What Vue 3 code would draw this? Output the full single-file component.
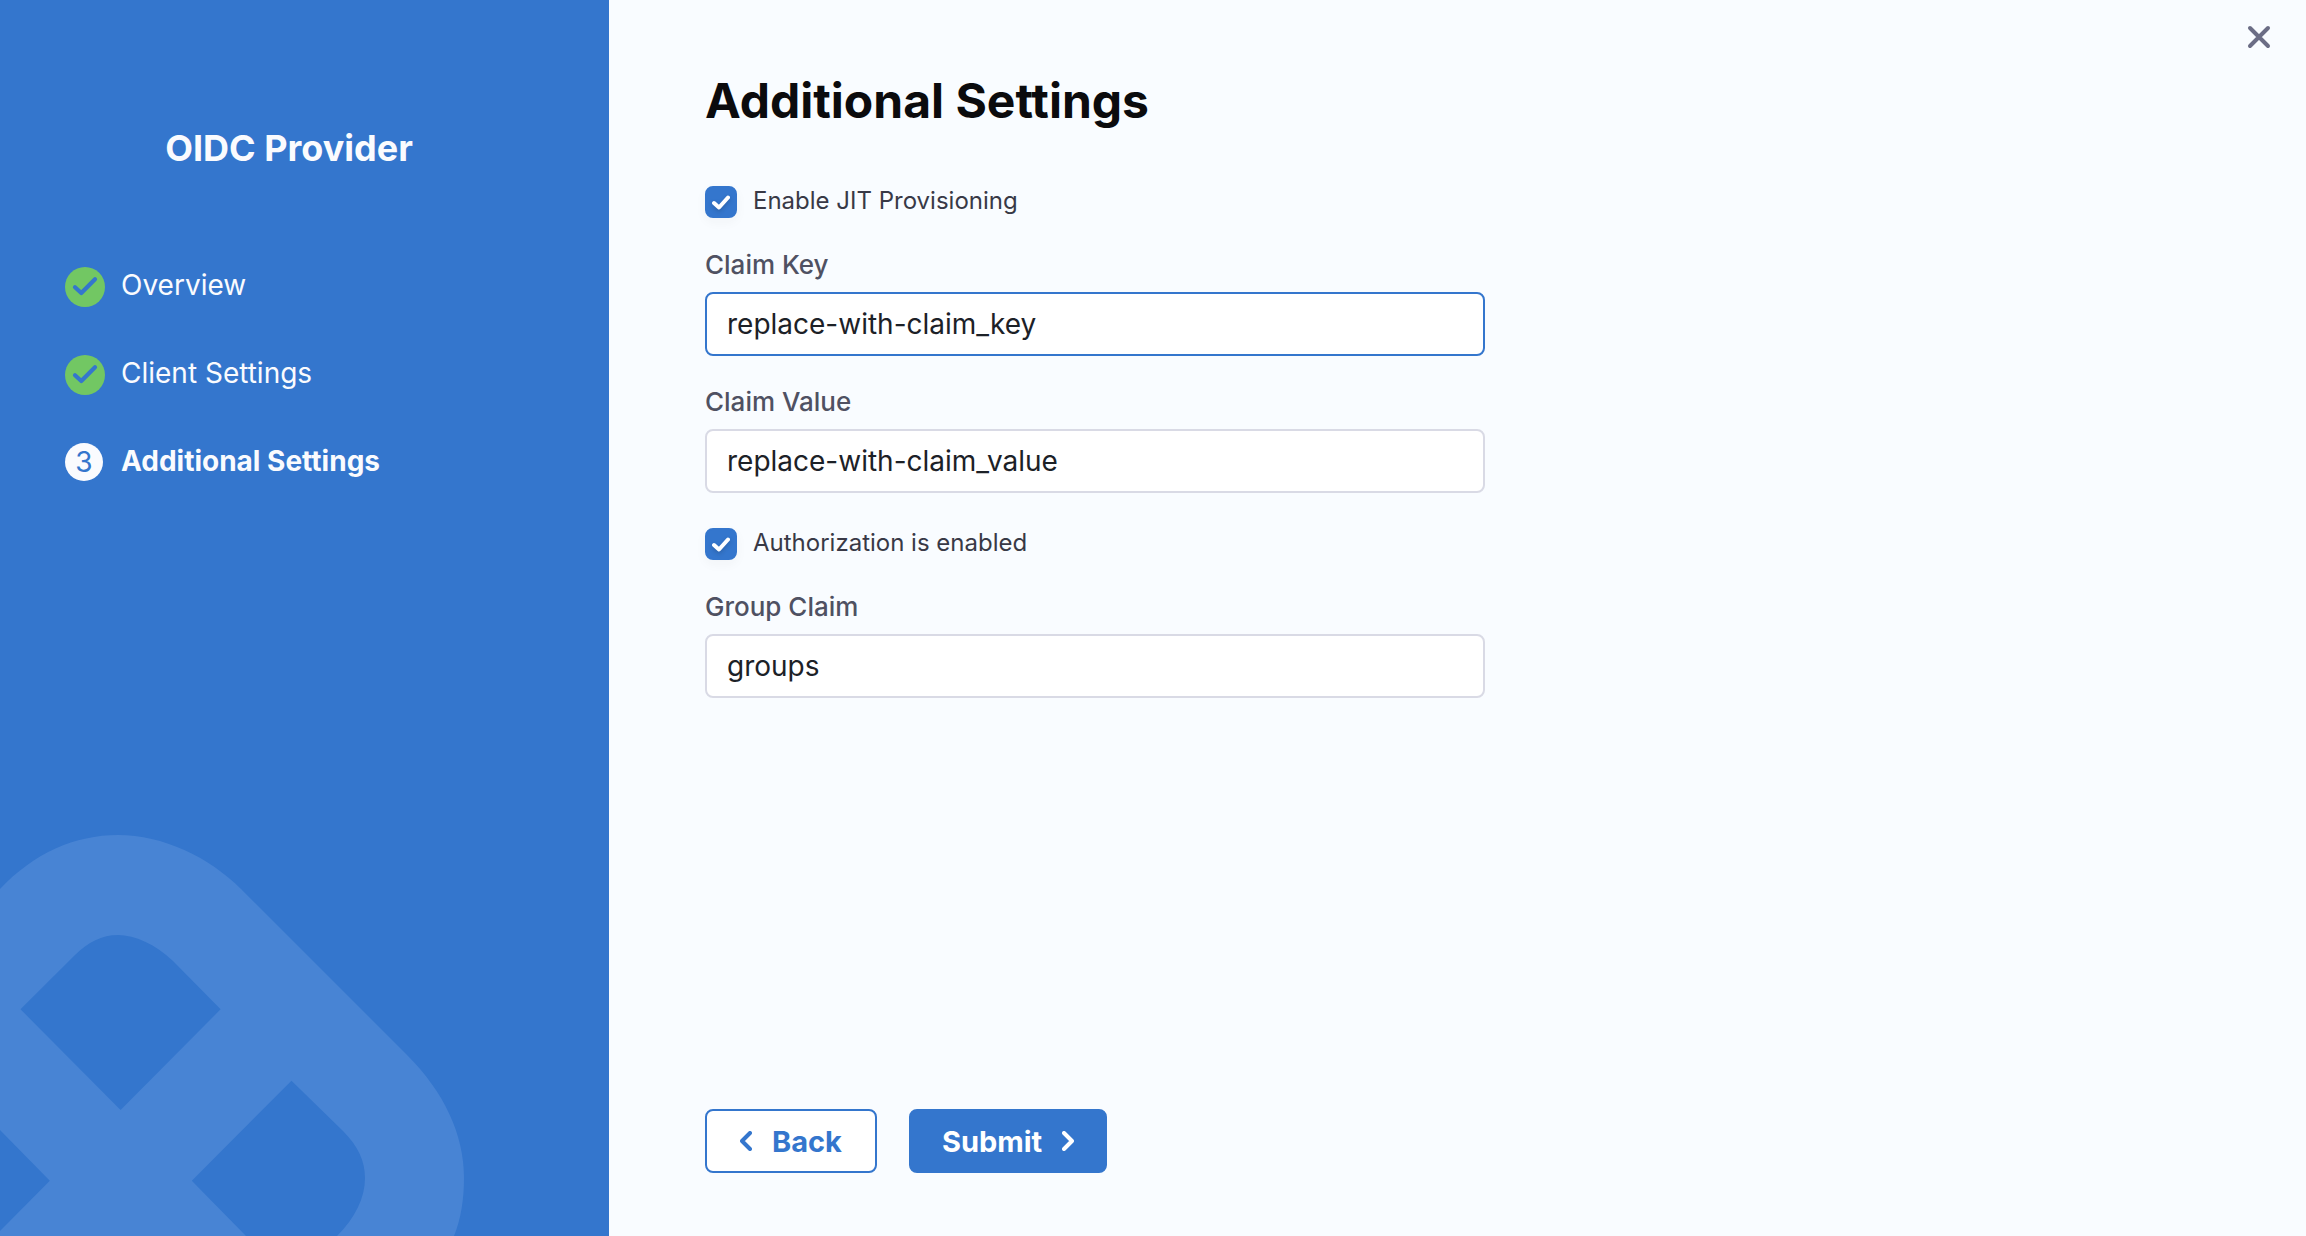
<script setup>
import { ref } from 'vue'

const steps = [
  { label: 'Overview', done: true },
  { label: 'Client Settings', done: true },
  { label: 'Additional Settings', done: false },
]

const jitEnabled = ref(true)
const claimKey = ref('replace-with-claim_key')
const claimValue = ref('replace-with-claim_value')
const authorizationEnabled = ref(true)
const groupClaim = ref('groups')
</script>

<template>
  <div class="wizard">
    <aside class="sidebar">
      <h2 class="sidebar-title">OIDC Provider</h2>
      <ol class="steps">
        <li v-for="(step, index) in steps" :key="step.label" class="step" :class="{ current: !step.done }">
          <svg v-if="step.done" class="step-done" viewBox="0 0 40 40" aria-hidden="true">
            <circle cx="20" cy="20" r="20" fill="#72c763" />
            <path d="M10 20.2 16.3 26 30 12.2" fill="none" stroke="#3476cd" stroke-width="4.2" stroke-linecap="round" stroke-linejoin="round" />
          </svg>
          <span v-else class="step-number">{{ index + 1 }}</span>
          <span class="step-label">{{ step.label }}</span>
        </li>
      </ol>
      <svg class="watermark" viewBox="0 0 470 404" aria-hidden="true">
        <path
          fill="#4884d4"
          fill-rule="evenodd"
          d="M0 57C34 21 75 3 118 3C163 3 209 25 241 57L407 223C444 260 464 302 464 346C464 367 461 387 454 404H337C355 386 365 366 365 346C365 329 358 314 343 299L291.500 248.700 191.800 348.700 246 404H0V399L49.800 348.700 0 298ZM20.500 177.300 75 123C88 110 102 103 118 103C135 103 155 112 173 129L220.600 177.300 120.600 278Z"
        />
      </svg>
    </aside>

    <main class="content">
      <button class="close" type="button" aria-label="Close">
        <svg viewBox="0 0 24 24" aria-hidden="true">
          <path d="M3 3 21 21M21 3 3 21" fill="none" stroke="#6b6d85" stroke-width="4" stroke-linecap="round" />
        </svg>
      </button>

      <form class="form" @submit.prevent>
        <h1 class="title">Additional Settings</h1>

        <label class="check-row">
          <span class="check">
            <input v-model="jitEnabled" type="checkbox" />
            <svg viewBox="0 0 32 32" aria-hidden="true"><path d="M9 17 14 21.500 23 11.500" /></svg>
          </span>
          <span class="check-label">Enable JIT Provisioning</span>
        </label>

        <div class="field">
          <label for="claim-key">Claim Key</label>
          <input id="claim-key" v-model="claimKey" class="active" type="text" />
        </div>

        <div class="field">
          <label for="claim-value">Claim Value</label>
          <input id="claim-value" v-model="claimValue" type="text" />
        </div>

        <label class="check-row">
          <span class="check">
            <input v-model="authorizationEnabled" type="checkbox" />
            <svg viewBox="0 0 32 32" aria-hidden="true"><path d="M9 17 14 21.500 23 11.500" /></svg>
          </span>
          <span class="check-label">Authorization is enabled</span>
        </label>

        <div class="field">
          <label for="group-claim">Group Claim</label>
          <input id="group-claim" v-model="groupClaim" type="text" />
        </div>

        <div class="actions">
          <button class="btn back" type="button">
            <svg viewBox="0 0 12 20" aria-hidden="true"><path d="M10 2 2 10 10 18" /></svg>
            Back
          </button>
          <button class="btn submit" type="submit">
            Submit
            <svg viewBox="0 0 12 20" aria-hidden="true"><path d="M2 2 10 10 2 18" /></svg>
          </button>
        </div>
      </form>
    </main>
  </div>
</template>

<style>
body {
  margin: 0;
}
</style>

<style scoped>
.wizard {
  display: flex;
  min-height: 100vh;
  background: #f9fcff;
  font-family: Inter, 'Liberation Sans', sans-serif;
}

.wizard * {
  box-sizing: border-box;
}

.sidebar {
  position: relative;
  flex: 0 0 609px;
  padding: 124px 32px 0 65px;
  overflow: hidden;
  background: #3476cd;
  color: #fafbfe;
}

.sidebar-title {
  margin: 0;
  padding-right: 64px;
  font-size: 36px;
  font-weight: 700;
  line-height: 48px;
  text-align: center;
}

.steps {
  display: grid;
  gap: 48px;
  margin: 95px 0 0;
  padding: 0;
  list-style: none;
}

.step {
  display: flex;
  align-items: flex-start;
  height: 40px;
  font-size: 28px;
  line-height: 36px;
}

.step-done {
  flex: none;
  width: 40px;
  height: 40px;
  margin-right: 16px;
}

.step-number {
  flex: none;
  width: 38px;
  height: 38px;
  margin-right: 18px;
  border-radius: 50%;
  background: #fafbfe;
  color: #3476cd;
  line-height: 38px;
  text-align: center;
}

.current .step-label {
  font-weight: 700;
}

.watermark {
  position: absolute;
  bottom: 0;
  left: 0;
  width: 470px;
  height: 404px;
}

.content {
  position: relative;
  display: flex;
  flex: 1;
  padding: 72px 96px 63px;
}

.close {
  position: absolute;
  top: 21px;
  right: 31px;
  display: flex;
  width: 32px;
  height: 32px;
  padding: 4px;
  border: 0;
  background: none;
}

.close svg {
  width: 24px;
  height: 24px;
}

.form {
  display: flex;
  flex: 1;
  flex-direction: column;
  max-width: 780px;
}

.title {
  margin: 0 0 56px;
  color: #0b0b0d;
  font-size: 48px;
  font-weight: 700;
  line-height: 58px;
}

.check-row {
  display: flex;
  align-items: flex-start;
  align-self: flex-start;
  gap: 16px;
  margin-bottom: 32px;
  color: #383946;
  font-size: 24px;
  line-height: 30px;
}

.field + .check-row {
  margin-top: 4px;
}

.check {
  position: relative;
  width: 32px;
  height: 32px;
}

.check input {
  display: block;
  width: 32px;
  height: 32px;
  margin: 0;
  border: 2px solid #d9dae5;
  border-radius: 8px;
  background: #fff;
  box-shadow: 0 4px 12px rgb(40 41 61 / 4%);
  appearance: none;
}

.check input:checked {
  border-color: #3476cd;
  background: #3476cd;
}

.check svg {
  position: absolute;
  inset: 0;
  visibility: hidden;
  fill: none;
  stroke: #fff;
  stroke-linecap: round;
  stroke-linejoin: round;
  stroke-width: 4;
  filter: drop-shadow(0 2px 2px rgb(16 22 26 / 20%));
  pointer-events: none;
}

.check input:checked + svg {
  visibility: visible;
}

.field {
  display: grid;
  gap: 12px;
  margin-bottom: 31px;
}

.field label {
  color: #4f5162;
  font-size: 26px;
  font-weight: 500;
  line-height: 30px;
}

.field input {
  width: 100%;
  height: 64px;
  padding: 0 20px;
  border: 2px solid #d9dae5;
  border-radius: 8px;
  outline: none;
  background: #fff;
  color: #1c2127;
  font: 400 28px Inter, 'Liberation Sans', sans-serif;
}

.field input.active,
.field input:focus {
  border-color: #3476cd;
}

.actions {
  display: flex;
  gap: 32px;
  margin-top: auto;
}

.btn {
  display: flex;
  align-items: center;
  gap: 20px;
  height: 64px;
  border: 2px solid #3476cd;
  border-radius: 8px;
  font: 700 29px Inter, 'Liberation Sans', sans-serif;
}

.btn svg {
  width: 12px;
  height: 20px;
  fill: none;
  stroke: currentColor;
  stroke-linecap: round;
  stroke-linejoin: round;
  stroke-width: 4;
}

.back {
  padding: 0 33px;
  background: #fff;
  color: #3476cd;
}

.submit {
  padding: 0 31px;
  background: #3476cd;
  color: #fff;
}
</style>
